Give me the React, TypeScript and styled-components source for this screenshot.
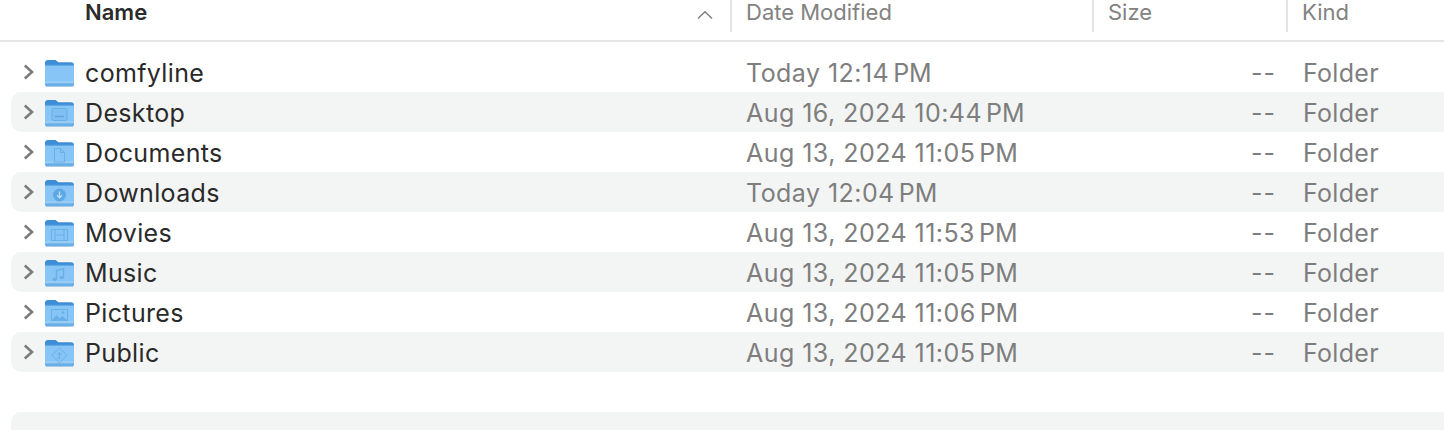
import styled, { createGlobalStyle } from 'styled-components';

const GlobalStyle = createGlobalStyle`
    html, body {
        margin: 0;
        padding: 0;
        background: #ffffff;
        overflow: hidden;
    }
    #root {
        width: 1444px;
        height: 430px;
    }
`;

type Glyph =
    | 'none'
    | 'desktop'
    | 'document'
    | 'download'
    | 'movie'
    | 'music'
    | 'picture'
    | 'public';

const rows: { name: string; date: string; time: string; glyph: Glyph }[] = [
    { name: 'comfyline', date: 'Today 12:14', time: 'PM', glyph: 'none' },
    { name: 'Desktop', date: 'Aug 16, 2024 10:44', time: 'PM', glyph: 'desktop' },
    { name: 'Documents', date: 'Aug 13, 2024 11:05', time: 'PM', glyph: 'document' },
    { name: 'Downloads', date: 'Today 12:04', time: 'PM', glyph: 'download' },
    { name: 'Movies', date: 'Aug 13, 2024 11:53', time: 'PM', glyph: 'movie' },
    { name: 'Music', date: 'Aug 13, 2024 11:05', time: 'PM', glyph: 'music' },
    { name: 'Pictures', date: 'Aug 13, 2024 11:06', time: 'PM', glyph: 'picture' },
    { name: 'Public', date: 'Aug 13, 2024 11:05', time: 'PM', glyph: 'public' },
];

const GlyphShape = ({ glyph }: { glyph: Glyph }) => {
    const line = '#69afe8';
    switch (glyph) {
        case 'desktop':
            return (
                <g fill="none" stroke={line} strokeWidth="1">
                    <rect x="8" y="10.500" width="15" height="12" rx="2" fill="#7fbff1" />
                    <path d="M11 18.500h9" strokeWidth="1.500" stroke="#5ca6e2" />
                </g>
            );
        case 'document':
            return (
                <path
                    d="M10.500 10.500h6l4 4v9.500h-10zM16.500 10.500v4h4"
                    fill="none"
                    stroke={line}
                    strokeWidth="1"
                />
            );
        case 'download':
            return (
                <g>
                    <circle cx="15.500" cy="17" r="6.500" fill="#5ea8e4" />
                    <path
                        d="M15.500 13.500v6M13 17.300l2.500 2.500 2.500-2.500"
                        fill="none"
                        stroke="#b9def8"
                        strokeWidth="1.400"
                    />
                </g>
            );
        case 'movie':
            return (
                <path
                    d="M7.500 11.500h16v11h-16zM11 11.500v11M20 11.500v11M11 17h9"
                    fill="none"
                    stroke={line}
                    strokeWidth="1"
                />
            );
        case 'music':
            return (
                <g>
                    <path d="M12.500 21V12.500l7-1.800v8.500" fill="none" stroke={line} strokeWidth="1.400" />
                    <ellipse cx="10.800" cy="21.200" rx="2.200" ry="1.700" fill={line} />
                    <ellipse cx="17.800" cy="19.400" rx="2.200" ry="1.700" fill={line} />
                </g>
            );
        case 'picture':
            return (
                <g fill="none" stroke={line} strokeWidth="1">
                    <rect x="7.500" y="11.500" width="16" height="11" />
                    <path d="M8 22l4.500-5 3.300 3.200 2.500-2.200 4.700 4z" fill={line} stroke="none" />
                    <circle cx="19" cy="14.500" r="1.300" fill={line} stroke="none" />
                </g>
            );
        case 'public':
            return (
                <g fill="none" stroke={line} strokeWidth="1">
                    <path d="M15.500 9.800l7.500 7.500-7.500 7.500-7.500-7.500z" />
                    <path d="M15.500 21.500v-6.500M13.300 17l2.200-2.300 2.200 2.300M15.500 18.500l-2.200 1.800" />
                </g>
            );
        default:
            return null;
    }
};

const FolderIcon = ({ glyph }: { glyph: Glyph }) => (
    <FolderSvg viewBox="0 0 31 29" width="31" height="29">
        <path d="M2 28.300h27v.7H2z" fill="#c3ccd3" />
        <path
            d="M1 5C1 3 2 2 4 2h6.500c1.200 0 1.800.4 2.600 1.200L14.400 4.300H27c2 0 3 1 3 3V11H1z"
            fill="#3f8dd6"
        />
        <path d="M1 7.500h29V26c0 1.400-.8 2.300-2 2.300H3c-1.200 0-2-.9-2-2.300z" fill="#86c5f5" />
        <rect x="1" y="6.800" width="29" height="1" fill="#5ea8e6" />
        <rect x="1" y="23.500" width="29" height="1" fill="#a5d6f8" />
        <path d="M1 25.500h29V26c0 1.400-.8 2.300-2 2.300H3c-1.200 0-2-.9-2-2.300z" fill="#69aee5" />
        <GlyphShape glyph={glyph} />
    </FolderSvg>
);

export default function App() {
    return (
        <>
            <GlobalStyle />
            <Window>
                <Header>
                    <NameHead>
                        <span>Name</span>
                        <SortArrow viewBox="0 0 16 10" width="16" height="10">
                            <path
                                d="M1 8.500L8 1.800l7 6.700"
                                fill="none"
                                stroke="#7f7f7f"
                                strokeWidth="1.500"
                            />
                        </SortArrow>
                    </NameHead>
                    <ColumnHead $width={362}>Date Modified</ColumnHead>
                    <ColumnHead $width={194}>Size</ColumnHead>
                    <ColumnHead $width={158}>Kind</ColumnHead>
                </Header>
                <List>
                    {rows.map((row, index) => (
                        <Row key={row.name} $striped={index % 2 === 1}>
                            <NameCell>
                                <Chevron viewBox="0 0 12 18" width="12" height="18">
                                    <path
                                        d="M2.800 2.500L10 9l-7.200 6.500"
                                        fill="none"
                                        stroke="#7c7c7c"
                                        strokeWidth="2.600"
                                    />
                                </Chevron>
                                <FolderIcon glyph={row.glyph} />
                                <Name>{row.name}</Name>
                            </NameCell>
                            <DateCell>
                                {row.date}
                                <Meridiem>{row.time}</Meridiem>
                            </DateCell>
                            <SizeCell>--</SizeCell>
                            <KindCell>Folder</KindCell>
                        </Row>
                    ))}
                    <Row $striped={false} />
                    <Row $striped />
                </List>
            </Window>
        </>
    );
}

const Window = styled.div`
    width: 1444px;
    height: 430px;
    overflow: hidden;
    background: #ffffff;
    font-family: Inter, 'Liberation Sans', sans-serif;
    -webkit-font-smoothing: antialiased;
`;

const Header = styled.div`
    display: flex;
    height: 40px;
    border-bottom: 2px solid #e4e4e4;
    box-sizing: content-box;
`;

const NameHead = styled.div`
    width: 730px;
    height: 32px;
    flex: none;
    display: flex;
    align-items: center;
    justify-content: space-between;
    box-sizing: border-box;
    padding: 0 17px 8px 85px;
    font-size: 22px;
    font-weight: 600;
    line-height: 24px;
    color: #2b2b2b;
`;

const SortArrow = styled.svg`
    display: block;
    margin-top: 5px;
`;

const ColumnHead = styled.div<{ $width: number }>`
    width: ${(props) => props.$width}px;
    height: 32px;
    flex: none;
    box-sizing: border-box;
    border-left: 2px solid #e4e4e4;
    padding-left: 14px;
    font-size: 22px;
    line-height: 24px;
    color: #828282;
`;

const List = styled.div`
    display: flex;
    flex-direction: column;
    padding: 10px 0 0 11px;
`;

const Row = styled.div<{ $striped: boolean }>`
    display: flex;
    align-items: center;
    flex: none;
    height: 40px;
    border-radius: 10px 0 0 10px;
    font-size: 25px;
    line-height: 32px;
    background: ${(props) => (props.$striped ? '#f3f5f4' : 'transparent')};
`;

const NameCell = styled.div`
    width: 720px;
    flex: none;
    display: flex;
    align-items: center;
    padding-left: 11px;
    box-sizing: border-box;
`;

const Chevron = styled.svg`
    flex: none;
    margin-top: -1px;
`;

const FolderSvg = styled.svg`
    flex: none;
    margin-left: 10px;
`;

const Name = styled.span`
    margin: 2px 0 0 10px;
    letter-spacing: 0.35px;
    color: #2a2a2a;
`;

const DateCell = styled.div`
    width: 520px;
    flex: none;
    margin-top: 2px;
    padding-left: 15px;
    box-sizing: border-box;
    letter-spacing: 0.45px;
    color: #7e7e7e;
`;

const Meridiem = styled.span`
    margin-left: 4px;
    letter-spacing: 0;
`;

const SizeCell = styled.div`
    width: 52px;
    flex: none;
    margin-top: 2px;
    letter-spacing: 1px;
    color: #7e7e7e;
`;

const KindCell = styled.div`
    flex: none;
    margin-top: 2px;
    letter-spacing: 0.3px;
    color: #7e7e7e;
`;
